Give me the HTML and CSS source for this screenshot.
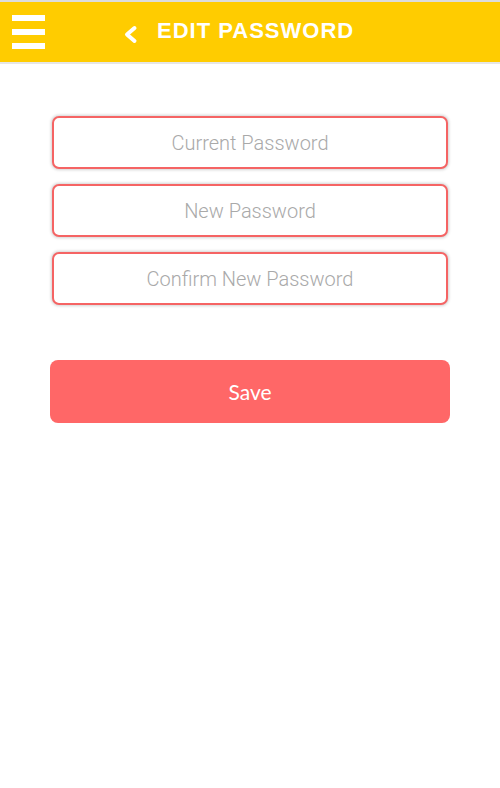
FILE: index.html
```html
<!DOCTYPE html>
<html>
<head>
<meta charset="utf-8">
<link rel="stylesheet" href="styles.css">
</head>
<body>
<header class="topbar">
  <div class="burger"><span></span><span></span><span></span></div>
  <svg class="back" width="15" height="19" viewBox="0 0 15 19"><path d="M11.5 3 L4 9.5 L11.5 16" fill="none" stroke="#fff" stroke-width="4" stroke-linecap="round" stroke-linejoin="round"/></svg>
  <h1 class="title">EDIT PASSWORD</h1>
</header>
<main class="content">
  <form class="form">
    <input class="field" type="password" placeholder="Current Password">
    <input class="field" type="password" placeholder="New Password">
    <input class="field" type="password" placeholder="Confirm New Password">
    <button class="save" type="button">Save</button>
  </form>
</main>
</body>
</html>
```
FILE: styles.css
```css
html, body { margin: 0; padding: 0; background: #fff; }
body { width: 500px; height: 788px; overflow: hidden; font-family: "Liberation Sans", Arial, sans-serif; }
.topbar {
  height: 60px;
  background: #ffcc00;
  border-top: 2px solid #dcdcdc;
  border-bottom: 2px solid #e6e6e6;
  display: flex;
  align-items: center;
  padding-left: 12px;
}
.burger { display: flex; flex-direction: column; gap: 8px; width: 33px; }
.burger span { display: block; height: 6px; background: #fff; }
.back { margin-left: 78px; margin-top: 4px; }
.title {
  margin: 0 0 3px 19px;
  color: #fff;
  font-family: "Liberation Sans", Arial, sans-serif;
  font-weight: 700;
  font-size: 22px;
  letter-spacing: 1px;
  line-height: 1;
}
.content { padding: 52px 50px 0; }
.form { display: flex; flex-direction: column; align-items: center; }
.field {
  box-sizing: border-box;
  width: 396px;
  height: 53px;
  margin-bottom: 15px;
  border: 2.5px solid #f56464;
  border-radius: 7px;
  box-shadow: 0 0 3px 1px rgba(0,0,0,0.18);
  background: #fff;
  text-align: center;
  font-family: Roboto, "Noto Sans", sans-serif;
  font-weight: 300;
  font-size: 20px;
  color: #555;
  outline: none;
}
.field::placeholder { color: #a9a9a9; }
.save {
  margin-top: 40px;
  width: 400px;
  height: 63px;
  border: none;
  border-radius: 8px;
  background: #ff6767;
  color: #fff;
  font-family: Lato, "Noto Sans", sans-serif;
  font-size: 21px;
  font-weight: 400;
}
```
